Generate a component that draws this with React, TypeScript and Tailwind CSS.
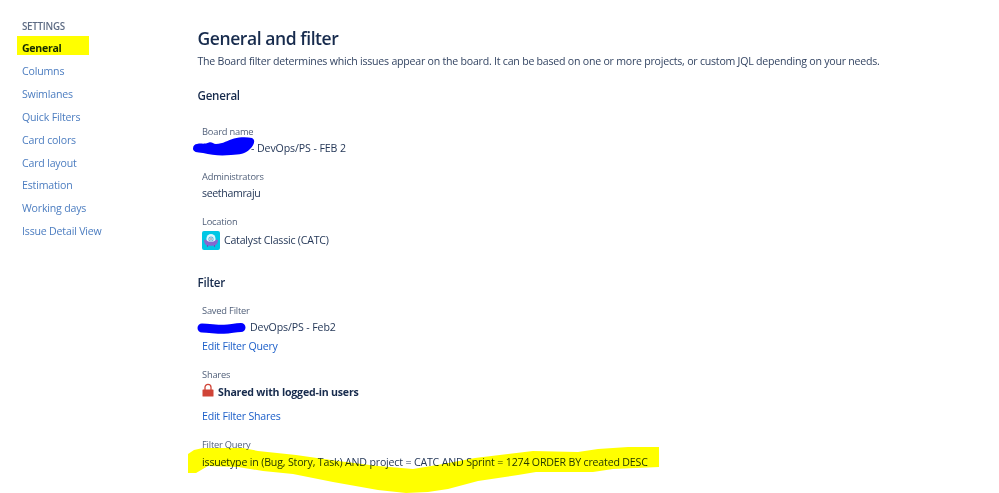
import type { ReactNode } from "react";

const navItems = [
  "Columns",
  "Swimlanes",
  "Quick Filters",
  "Card colors",
  "Card layout",
  "Estimation",
  "Working days",
  "Issue Detail View",
];

function Label({ children }: { children: ReactNode }) {
  return (
    <div className="h-4 text-[9.3px] font-medium leading-[18px] tracking-[-0.2px] text-[#505f79]">{children}</div>
  );
}

function Value({ children }: { children: ReactNode }) {
  return (
    <div className="flex h-4 items-center text-[10.6px] leading-4 tracking-[-0.17px] text-[#253858]">{children}</div>
  );
}

function SectionTitle({ children }: { children: ReactNode }) {
  return (
    <h2 className="h-4 text-[11.6px] font-semibold leading-[17px] tracking-[-0.25px] text-[#172b4d]">{children}</h2>
  );
}

function EditLink({ children }: { children: ReactNode }) {
  return (
    <a href="#" className="block h-4 w-fit text-[10.6px] leading-4 tracking-[-0.23px] text-[#1c5fc9]">
      {children}
    </a>
  );
}

function ProjectAvatar() {
  return (
    <svg width="18" height="19" viewBox="0 0 18 19" className="mr-1 shrink-0">
      <rect width="18" height="19" rx="2" fill="#00c7e5" />
      <path d="M4.5 11V7.5a4.5 4.5 0 0 1 9 0V11z" fill="#e3f6fc" />
      <path
        d="M2 9.5c0-1.2 1.5-1.2 2.5-.2 1.2 1.3 2.5 1.7 4.5 1.7s3.3-.4 4.5-1.7c1-1 2.5-1 2.5.2 0 3-2 5-4.5 5.2h-5C4 14.5 2 12.5 2 9.5z"
        fill="#8668cf"
      />
      <circle cx="9" cy="8" r="2.6" fill="#5fb4dc" />
      <circle cx="9" cy="8" r="1.6" fill="#fff" />
      <circle cx="9" cy="8" r="0.7" fill="#344563" />
      <path d="M5.5 14v2M12.5 14v2" stroke="#6554c0" strokeWidth="1" />
    </svg>
  );
}

function LockIcon() {
  return (
    <svg width="12" height="14" viewBox="0 0 12 14" className="relative -top-[2px] mr-1 shrink-0">
      <path d="M3 7V4.3a3 3 0 0 1 6 0V7" fill="none" stroke="#d04437" strokeWidth="1.3" />
      <rect x="0.5" y="6.5" width="11" height="7" rx="0.6" fill="#d04437" />
    </svg>
  );
}

function Sidebar() {
  return (
    <nav className="w-[180px] shrink-0 pt-[19px]">
      <div className="ml-[22px] h-4 text-[9.8px] font-semibold leading-4 tracking-[-0.27px] text-[#5e6c84]">
        SETTINGS
      </div>
      <div className="ml-[17px] mt-px h-[19px] w-[72px] bg-[#ffff00] pl-[5px] text-[10.6px] font-bold leading-[24px] tracking-[-0.3px] text-[#172b00]">
        General
      </div>
      <ul className="ml-[22px] mt-[5px]">
        {navItems.map((item) => (
          <li key={item} className="h-[22.9px] text-[10.6px] leading-[23px] tracking-[-0.19px] text-[#4c7dc0]">
            {item}
          </li>
        ))}
      </ul>
    </nav>
  );
}

export default function App() {
  return (
    <div className="flex h-[493px] w-[999px] overflow-hidden bg-white font-['Open_Sans','Noto_Sans',sans-serif]">
      <Sidebar />
      <main className="ml-[17.5px] pt-[26px]">
        <h1 className="h-6 text-[17.5px] font-semibold leading-6 tracking-[-0.42px] text-[#172b4d]">
          General and filter
        </h1>
        <p className="mt-[3px] h-4 whitespace-nowrap text-[10.6px] leading-4 tracking-[-0.23px] text-[#344563]">
          The Board filter determines which issues appear on the board. It can be based on one or more projects, or
          custom JQL depending on your needs.
        </p>

        <div className="mt-[18px]">
          <SectionTitle>General</SectionTitle>
        </div>
        <div className="ml-[4.5px] mt-5">
          <Label>Board name</Label>
          <div className="relative mt-px">
            <Value>
              <span className="ml-[49px] tracking-[-0.1px]">- DevOps/PS - FEB 2</span>
            </Value>
            <svg width="62" height="19" viewBox="0 0 62 19" className="absolute -left-[9.5px] -top-[3.5px]">
              <path
                d="M4 7C8 6 12 7.5 16 5.5c3-.8 4 1.5 7 1.5 7 0 12-4 18-5.500C47 0 54 0 59 1c4 2 2 7-2 11-5 5-10 5.500-19 6-10 1-19 .3-28-2-6-.5-10-1-10-4.500C0 8.500 2 7 4 7z"
                fill="#0000ff"
              />
            </svg>
          </div>
          <div className="mt-3">
            <Label>Administrators</Label>
          </div>
          <div className="mt-px">
            <Value>
              <span className="tracking-[-0.36px]">seethamraju</span>
            </Value>
          </div>
          <div className="mt-3">
            <Label>Location</Label>
          </div>
          <div className="mt-[3px]">
            <Value>
              <ProjectAvatar />
              <span className="tracking-[-0.22px]">Catalyst Classic (CATC)</span>
            </Value>
          </div>
        </div>

        <div className="mt-[26px]">
          <SectionTitle>Filter</SectionTitle>
        </div>
        <div className="ml-[4.5px] mt-3">
          <Label>Saved Filter</Label>
          <div className="relative mt-px">
            <Value>
              <span className="ml-[48px] tracking-[-0.12px]">DevOps/PS - Feb2</span>
            </Value>
            <svg width="50" height="13" viewBox="0 0 50 13" className="absolute -left-[5px] top-[3px]">
              <path
                d="M5 6c8 0 14 1.5 22 1.3 7 0 10-1.8 17-1.8"
                fill="none"
                stroke="#0000ff"
                strokeWidth="9"
                strokeLinecap="round"
              />
            </svg>
          </div>
          <div className="mt-[3px]">
            <EditLink>Edit Filter Query</EditLink>
          </div>
          <div className="mt-3">
            <Label>Shares</Label>
          </div>
          <div className="mt-0.5 flex h-4 items-center text-[10.6px] font-bold leading-4 tracking-[-0.2px] text-[#172b4d]">
            <LockIcon />
            Shared with logged-in users
          </div>
          <div className="mt-2">
            <EditLink>Edit Filter Shares</EditLink>
          </div>
          <div className="relative mt-3">
            <Label>Filter Query</Label>
            <div className="mt-0.5">
              <Value>issuetype in (Bug, Story, Task) AND project = CATC AND Sprint = 1274 ORDER BY created DESC</Value>
            </div>
            <svg
              width="471"
              height="47"
              viewBox="0 0 471 47"
              className="absolute -left-[14px] top-[10px] mix-blend-multiply"
            >
              <path
                d="M0 8L6 4 15 2H55L70 5 108 9 150 15 190 20 225 23 255 18 287 12 320 8 345 5 390 6 410 3 440 1H471V21L448 22 425 23 405 26H348L330 29 290 35 260 43 240 46 218 47 190 44 145 36 105 28 75 25 50 21 20 20 8 27H0z"
                fill="#ffff00"
              />
            </svg>
          </div>
        </div>
      </main>
    </div>
  );
}
